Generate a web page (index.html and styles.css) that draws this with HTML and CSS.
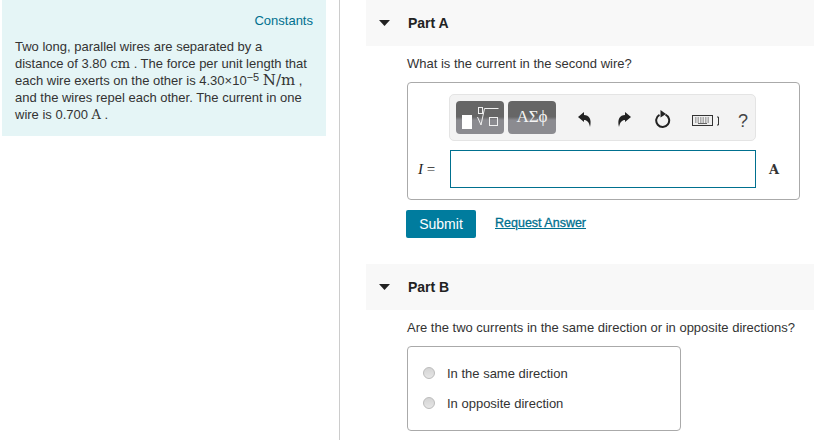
FILE: index.html
```html
<!DOCTYPE html>
<html>

<head>
    <title>Part A and Part B</title>
    <link rel="stylesheet" href="styles.css">
</head>

<body>
    <div class="page">
        <div class="sidebar">
            <div class="intro">
                <div class="constants">Constants</div>
                <p class="intro-text">Two long, parallel wires are separated by a<br>
                    distance of 3.80 <span class="math">cm</span> . The force per unit length that<br>
                    each wire exerts on the other is 4.30×10<sup class="exp">−5</sup> <span class="math math-big">N/m</span> ,<br>
                    and the wires repel each other. The current in one<br>
                    wire is 0.700 <span class="math">A</span> .</p>
            </div>
        </div>

        <div class="main">
            <div class="part-head">
                <svg class="caret" width="11" height="6" viewBox="0 0 11 6"><path d="M0 0H11L5.500 6Z" /></svg>
                <span>Part A</span>
            </div>
            <div class="part-body">
                <p class="question">What is the current in the second wire?</p>
                <div class="answer-box">
                    <div class="toolbar">
                        <div class="tool-btn tool-templates">
                            <span class="tpl-block"></span>
                            <svg class="tpl-root" width="22" height="21" viewBox="0 0 22 21" fill="none" stroke="#f0f0f0" stroke-width="1">
                                <rect x="1.500" y="1.500" width="4" height="6" />
                                <path d="M0.500 11L4 19L7.500 2.500H21.500" />
                                <rect x="12.500" y="11.500" width="8" height="8" />
                            </svg>
                        </div>
                        <div class="tool-btn tool-symbols">ΑΣϕ</div>
                        <div class="tool-icons">
                            <svg class="icon-undo" width="14" height="15" viewBox="0 0 14 15"><path d="M0 5L6 0V3C11 3 14 7 12 15C11 10 9 8 6 8V10Z" /></svg>
                            <svg class="icon-redo" width="14" height="15" viewBox="0 0 14 15"><path d="M14 5L8 0V3C3 3 0 7 2 15C3 10 5 8 8 8V10Z" /></svg>
                            <svg class="icon-reset" width="16" height="18" viewBox="0 0 16 18" fill="none"><path d="M10.500 4.600A6.500 6.500 0 1 1 4.500 4.800" stroke="#222" stroke-width="2" /><path d="M5.500 0L11 4L5.500 7.500Z" fill="#222" /></svg>
                            <svg class="icon-keyboard" width="27" height="11" viewBox="0 0 27 11">
                                <rect x="0.500" y="0.500" width="20" height="10" fill="#eeeeee" stroke="#333" />
                                <path d="M3 3H18M3 5H18M3 7H18" stroke="#666" stroke-dasharray="1.500 1" />
                                <path d="M6 8.500H15" stroke="#666" />
                                <path d="M25 2H26.500V10H25" fill="none" stroke="#333" />
                            </svg>
                            <span class="icon-help">?</span>
                        </div>
                    </div>
                    <div class="answer-row">
                        <span class="answer-label"><i>I</i> =</span>
                        <div class="answer-input"></div>
                        <span class="answer-unit">A</span>
                    </div>
                </div>
                <div class="actions">
                    <div class="submit">Submit</div>
                    <a class="request" href="#">Request Answer</a>
                </div>
            </div>

            <div class="part-head part-b">
                <svg class="caret" width="11" height="6" viewBox="0 0 11 6"><path d="M0 0H11L5.500 6Z" /></svg>
                <span>Part B</span>
            </div>
            <div class="part-body">
                <p class="question">Are the two currents in the same direction or in opposite directions?</p>
                <div class="choice-box">
                    <div class="choice"><span class="radio"></span>In the same direction</div>
                    <div class="choice"><span class="radio"></span>In opposite direction</div>
                </div>
            </div>
        </div>
    </div>
</body>

</html>
```

FILE: styles.css
```css
body {
    margin: 0;
    padding: 0;
    background: #ffffff;
    font-family: "Liberation Sans", Arial, sans-serif;
    font-size: 13px;
    color: #333333;
}

.page {
    display: flex;
    height: 440px;
    overflow: hidden;
}

.sidebar {
    box-sizing: border-box;
    width: 340px;
    flex: none;
    padding-left: 2px;
    border-right: 1px solid #cccccc;
}

.intro {
    box-sizing: border-box;
    width: 324px;
    height: 136px;
    padding: 12px 13px 0;
    background: #e5f5f6;
}

.constants {
    text-align: right;
    color: #00708f;
    line-height: 17px;
}

.intro-text {
    margin: 9px 0 0;
    line-height: 17px;
}

.math {
    font-family: "DejaVu Serif", "Liberation Serif", serif;
    font-size: 13px;
    line-height: 0;
}

.math-big {
    font-size: 15px;
}

.exp {
    font-size: 11px;
    line-height: 0;
    vertical-align: 4px;
}

.main {
    flex: 1;
    padding-left: 26px;
}

.part-head {
    display: flex;
    align-items: center;
    height: 46px;
    padding-left: 13px;
    background: #f8f8f8;
    font-size: 14px;
    font-weight: bold;
    color: #222222;
}

.part-head span {
    margin-left: 18px;
}

.part-b {
    margin-top: 26px;
}

.caret {
    fill: #222222;
}

.part-body {
    padding-left: 41px;
}

.question {
    margin: 0;
    padding-top: 9px;
    height: 27px;
    line-height: 17px;
    white-space: nowrap;
}

.answer-box {
    box-sizing: border-box;
    width: 393px;
    height: 118px;
    border: 1px solid #aaaaaa;
    border-radius: 4px;
    padding-top: 11px;
}

.toolbar {
    box-sizing: border-box;
    display: flex;
    align-items: center;
    width: 307px;
    height: 47px;
    margin-left: 41px;
    padding-left: 6px;
    background: #f3f3f3;
    border: 1px solid #e4e4e4;
    border-radius: 5px;
}

.tool-btn {
    box-sizing: border-box;
    display: flex;
    align-items: center;
    justify-content: center;
    width: 48px;
    height: 33px;
    border-radius: 4px;
    background: linear-gradient(#666666 48%, #8b8b90 58%);
    color: #f4f4f4;
}

.tool-templates {
    padding-left: 6px;
    justify-content: flex-start;
    gap: 5px;
}

.tpl-block {
    width: 10px;
    height: 14px;
    margin-top: 9px;
    background: #ffffff;
}

.tpl-root {
    margin-top: -2px;
}

.tool-symbols {
    margin-left: 4px;
    padding-bottom: 2px;
    font-family: "Liberation Serif", serif;
    font-size: 17px;
}

.tool-icons {
    display: flex;
    align-items: center;
    margin-left: 22px;
}

.icon-undo,
.icon-redo {
    fill: #222222;
    margin-top: 3px;
}

.icon-redo {
    margin-left: 25px;
}

.icon-reset {
    margin-left: 24px;
    margin-top: 2px;
}

.icon-keyboard {
    margin-left: 21px;
    margin-top: 5px;
}

.icon-help {
    margin-left: 19px;
    margin-top: 7px;
    font-size: 18px;
    color: #444444;
}

.answer-row {
    display: flex;
    align-items: center;
    margin-top: 9px;
}

.answer-label {
    width: 42px;
    padding-left: 10px;
    box-sizing: border-box;
    font-family: "Liberation Serif", serif;
    font-size: 15px;
    color: #222222;
}

.answer-input {
    box-sizing: border-box;
    width: 306px;
    height: 38px;
    border: 1px solid #00708f;
    background: #ffffff;
}

.answer-unit {
    margin-left: 13px;
    font-family: "DejaVu Serif", "Liberation Serif", serif;
    font-size: 13px;
    font-weight: bold;
}

.actions {
    display: flex;
    align-items: center;
    margin-top: 10px;
    margin-left: -1px;
}

.submit {
    width: 70px;
    height: 28px;
    line-height: 28px;
    text-align: center;
    background: #007c9e;
    border-radius: 2px;
    font-size: 14px;
    color: #ffffff;
}

.request {
    margin-left: 19px;
    margin-bottom: 2px;
    color: #00708f;
    font-size: 12.5px;
    -webkit-text-stroke: 0.3px #00708f;
}

.choice-box {
    box-sizing: border-box;
    width: 274px;
    height: 85px;
    padding-top: 11px;
    border: 1px solid #aaaaaa;
    border-radius: 4px;
}

.choice {
    display: flex;
    align-items: center;
    height: 30px;
    padding-left: 15px;
}

.radio {
    box-sizing: border-box;
    width: 12px;
    height: 12px;
    margin-right: 12px;
    border: 1px solid #bbbbbb;
    border-radius: 50%;
    background: linear-gradient(#d4d4d4, #e6e6e6);
}
```
